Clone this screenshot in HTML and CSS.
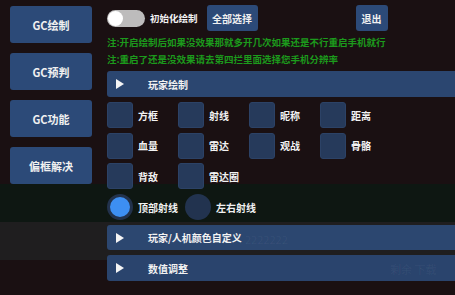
FILE: index.html
```html
<!DOCTYPE html>
<html lang="zh">
<head>
<meta charset="utf-8">
<link rel="stylesheet" href="styles.css">
</head>
<body>
<div class="app">
  <nav class="side">
    <button class="side-btn">GC绘制</button>
    <button class="side-btn">GC预判</button>
    <button class="side-btn">GC功能</button>
    <button class="side-btn">偏框解决</button>
  </nav>
  <main class="main">
    <div class="toprow">
      <span class="toggle"><span class="knob"></span></span>
      <span class="toggle-label">初始化绘制</span>
      <button class="btn">全部选择</button>
      <button class="btn exit">退出</button>
    </div>
    <p class="note">注:开启绘制后如果没效果那就多开几次如果还是不行重启手机就行</p>
    <p class="note">注:重启了还是没效果请去第四拦里面选择您手机分辨率</p>
    <div class="bar"><span class="tri"></span><span>玩家绘制</span></div>
    <div class="grid">
      <div class="item"><span class="box"></span>方框</div>
      <div class="item"><span class="box"></span>射线</div>
      <div class="item"><span class="box"></span>昵称</div>
      <div class="item"><span class="box"></span>距离</div>
      <div class="item"><span class="box"></span>血量</div>
      <div class="item"><span class="box"></span>雷达</div>
      <div class="item"><span class="box"></span>观战</div>
      <div class="item"><span class="box"></span>骨骼</div>
      <div class="item"><span class="box"></span>背敌</div>
      <div class="item"><span class="box"></span>雷达圈</div>
    </div>
    <div class="radios">
      <div class="radio-item"><span class="radio on"></span>顶部射线</div>
      <div class="radio-item"><span class="radio"></span>左右射线</div>
    </div>
    <div class="bar bar2"><span class="tri"></span><span>玩家/人机颜色自定义</span><span class="ghost g1">2222222</span></div>
    <div class="bar bar3"><span class="tri"></span><span>数值调整</span><span class="ghost g2">剩余 下载</span></div>
  </main>
</div>
</body>
</html>
```
FILE: styles.css
```css
* { box-sizing: border-box; }
html, body {
  margin: 0;
  width: 455px;
  height: 295px;
  overflow: hidden;
}
body {
  font-family: "Noto Sans CJK SC", "Noto Sans", sans-serif;
  font-weight: 700;
  color: #f2f2f2;
  background:
    linear-gradient(to bottom,
      #1a1012 0, #1a1012 184px,
      #0e1712 184px, #0e1712 222px,
      #1f1e1f 222px, #1f1e1f 260px,
      #1a1012 260px, #1a1012 100%);
}
.app {
  display: flex;
  gap: 15px;
  padding: 6px 0 0 10px;
}
.side {
  display: flex;
  flex-direction: column;
  gap: 10px;
  width: 82px;
  flex: none;
}
.side-btn {
  height: 37px;
  border: none;
  border-radius: 3px;
  background: #2c4a78;
  color: #f0f0f0;
  font: 700 11px "Noto Sans CJK SC", "Noto Sans", sans-serif;
  padding: 0;
}
.main {
  flex: none;
  width: 360px;
  margin-top: -1px;
  display: flex;
  flex-direction: column;
}
.toprow {
  display: flex;
  align-items: center;
  height: 26px;
}
.toggle {
  width: 38px;
  height: 17px;
  border-radius: 9px;
  background: #bdbcbc;
  display: flex;
  align-items: center;
  padding-left: 1px;
  flex: none;
}
.knob {
  width: 15px;
  height: 15px;
  border-radius: 50%;
  background: #ffffff;
}
.toggle-label {
  font-size: 9.5px;
  margin-left: 5px;
  white-space: nowrap;
}
.btn {
  height: 26px;
  border: none;
  border-radius: 3px;
  background: #2c4a78;
  color: #f0f0f0;
  font: 700 10px "Noto Sans CJK SC", "Noto Sans", sans-serif;
  padding: 0;
  margin-left: 9px;
  width: 51px;
  white-space: nowrap;
  flex: none;
}
.btn.exit {
  margin-left: 98px;
  width: 32px;
}
.note {
  margin: 0;
  color: #1c9a1c;
  font-size: 9.5px;
  line-height: 17px;
  white-space: nowrap;
}
.note:first-of-type { margin-top: 3px; }
.bar {
  position: relative;
  height: 26px;
  margin-top: 3px;
  width: 360px;
  background: #2b4670;
  border-radius: 3px 0 0 3px;
  display: flex;
  align-items: center;
  font-size: 10px;
  color: #f2f2f2;
}
.tri {
  width: 0;
  height: 0;
  border-left: 8px solid #f4f4f4;
  border-top: 5px solid transparent;
  border-bottom: 5px solid transparent;
  margin-left: 9px;
  margin-right: 24px;
}
.grid {
  display: grid;
  grid-template-columns: repeat(4, 71px);
  row-gap: 4.5px;
  margin-top: 5px;
}
.item {
  display: flex;
  align-items: center;
  gap: 5px;
  font-size: 10px;
  height: 26px;
}
.box {
  width: 26px;
  height: 26px;
  border-radius: 3px;
  background: #263a5b;
  border: 1px solid #2c4266;
}
.radios {
  display: flex;
  gap: 4px;
  margin-top: 5px;
  height: 26px;
}
.radio-item {
  display: flex;
  align-items: center;
  gap: 5px;
  font-size: 10px;
  width: 74px;
}
.radio {
  width: 26px;
  height: 26px;
  border-radius: 50%;
  background: #22334f;
  flex: none;
}
.radio.on {
  background: #3d8ff2;
  border: 3px solid #22324c;
}
.bar2 { margin-top: 5px; height: 25px; background: #2c4770; }
.bar3 { margin-top: 5px; height: 26px; background: #2a446d; }
.ghost {
  position: absolute;
  color: rgba(255, 255, 255, 0.06);
  font-size: 11px;
  font-weight: 400;
}
.g1 { left: 138px; top: 6px; }
.g2 { left: 283px; top: 6px; }
```
